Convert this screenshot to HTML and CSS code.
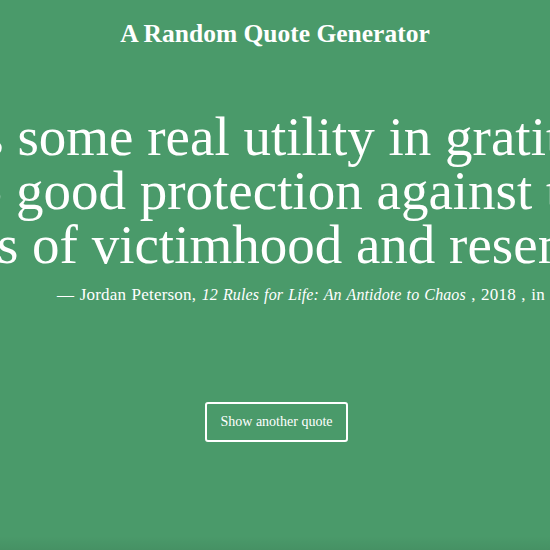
FILE: index.html
```html
<!DOCTYPE html>
<html lang="en">
<head>
<meta charset="utf-8">
<title>A Random Quote Generator</title>
<link rel="stylesheet" href="styles.css">
</head>
<body>
<main class="page">
  <header class="header">
    <h1 class="title">A Random Quote Generator</h1>
  </header>
  <section class="quote-box">
    <blockquote class="quote">
      <span class="line line-1">There is some real utility in gratitude:</span>
      <span class="line line-2">It's also good protection against the</span>
      <span class="line line-3">attitudes of victimhood and resentment.</span>
    </blockquote>
    <p class="source">— Jordan Peterson, <cite class="citation">12 Rules for Life: An Antidote to Chaos</cite> , 2018 , in Quotes</p>
  </section>
  <div class="actions">
    <button class="btn" type="button">Show another quote</button>
  </div>
</main>
</body>
</html>
```

FILE: styles.css
```css
html, body {
  margin: 0;
  padding: 0;
  height: 100%;
}

body {
  background: #4a9a6a;
  color: #ffffff;
  font-family: "Liberation Serif", "Times New Roman", serif;
  overflow: hidden;
}

.page {
  position: relative;
  min-height: 100%;
  display: flex;
  flex-direction: column;
  background: linear-gradient(to bottom, rgba(0,0,0,0) 0, rgba(0,0,0,0) 536px, rgba(0,0,0,0.06) 550px);
}

.header {
  padding-top: 19px;
  text-align: center;
}

.title {
  margin: 0;
  font-size: 25.5px;
  line-height: 29px;
  font-weight: 700;
}

.quote-box {
  margin-top: 62px;
}

.quote {
  margin: 0;
  font-size: 55px;
  line-height: 54px;
  font-weight: 400;
}

.line {
  display: block;
  white-space: nowrap;
}

.line-1 { margin-left: -175px; }
.line-2 { margin-left: -165px; }
.line-3 { margin-left: -168px; }

.source {
  margin: 13px 0 0 57px;
  font-size: 17px;
  line-height: 20px;
  letter-spacing: 0.2px;
  word-spacing: 1px;
  white-space: nowrap;
}

.citation {
  font-style: italic;
  font-size: 16px;
  letter-spacing: 0.1px;
}

.actions {
  margin-top: 97px;
  display: flex;
  justify-content: center;
  padding-left: 3px;
}

.btn {
  width: 143px;
  height: 40px;
  background: transparent;
  color: #ffffff;
  border: 2px solid #ffffff;
  border-radius: 3px;
  font-family: "Liberation Serif", "Times New Roman", serif;
  font-size: 14px;
  padding: 0;
}
```
